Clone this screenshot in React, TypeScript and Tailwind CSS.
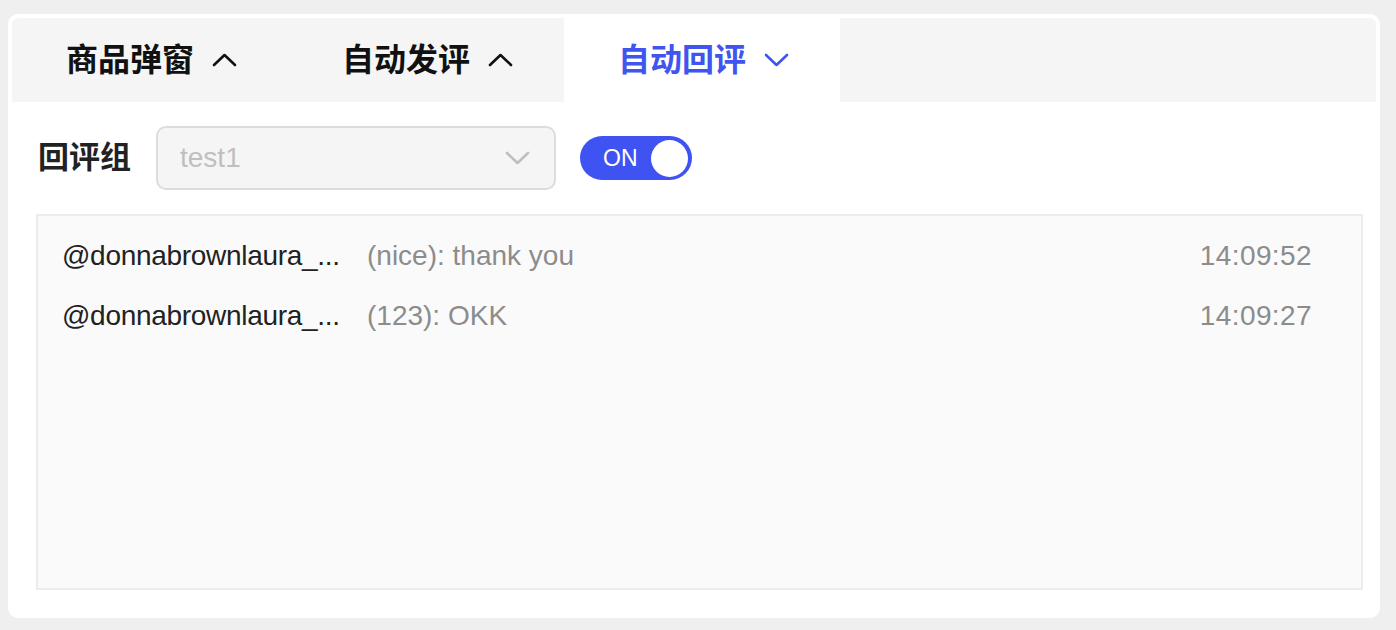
import React, { useState } from 'react';

const tabs = ['商品弹窗', '自动发评', '自动回评'];

const logs = [
    { user: '@donnabrownlaura_...', msg: '(nice): thank you', time: '14:09:52' },
    { user: '@donnabrownlaura_...', msg: '(123): OKK', time: '14:09:27' },
];

function Chevron({ up, className }: { up?: boolean; className?: string }) {
    return (
        <svg width="25" height="14" viewBox="0 0 25 14" fill="none" className={className}>
            <polyline
                points={up ? '2,12 12.5,2 23,12' : '2,2 12.5,12 23,2'}
                stroke="currentColor"
                strokeWidth="2.6"
                strokeLinecap="round"
                strokeLinejoin="round"
            />
        </svg>
    );
}

export default function App() {
    const [active, setActive] = useState(2);
    const [on, setOn] = useState(true);

    return (
        <div
            className="h-[630px] bg-[#efefef] pt-[14px] pl-[8px] pr-[16px]"
            style={{ fontFamily: '"Liberation Sans", "Noto Sans CJK SC", sans-serif' }}
        >
            <div className="h-[604px] bg-white rounded-[10px] p-[4px] flex flex-col">
                {/* Tabs */}
                <div className="flex h-[84px] bg-[#f5f5f5] rounded-t-[6px] overflow-hidden">
                    {tabs.map((t, i) => (
                        <button
                            key={t}
                            onClick={() => setActive(i)}
                            className={`w-[276px] h-full flex items-center pl-[54px] gap-[18px] text-[32px] font-bold ${
                                i === active ? 'bg-white text-[#4054f0]' : 'text-[#111]'
                            }`}
                        >
                            <span>{t}</span>
                            <Chevron up={i !== active} />
                        </button>
                    ))}
                </div>

                {/* Controls */}
                <div className="flex items-center mt-[24px] pl-[26px] h-[64px]">
                    <span className="text-[31px] font-bold text-[#222] w-[118px]">回评组</span>
                    <div className="w-[400px] h-[64px] rounded-[10px] border-2 border-[#dcdcdc] bg-[#f5f5f5] flex items-center justify-between pl-[22px] pr-[24px]">
                        <span className="text-[28px] text-[#bfbfbf]">test1</span>
                        <Chevron className="text-[#bfbfbf]" />
                    </div>
                    <button
                        onClick={() => setOn(!on)}
                        className={`ml-[24px] w-[112px] h-[44px] rounded-full flex items-center pl-[23px] pr-[4px] justify-between ${
                            on ? 'bg-[#3f52f2]' : 'bg-[#bfbfbf]'
                        }`}
                    >
                        <span className="text-white text-[23px] font-medium">ON</span>
                        <span className="w-[37px] h-[37px] rounded-full bg-white" />
                    </button>
                </div>

                {/* Log */}
                <div className="mt-[24px] ml-[24px] mr-[13px] h-[376px] bg-[#fafafa] border-2 border-[#ececec] pt-[10px] pl-[24px] pr-[49px]">
                    {logs.map((l, i) => (
                        <div key={i} className="flex items-center h-[60px] text-[28px]">
                            <span className="w-[305px] whitespace-nowrap text-[#222] tracking-[-0.3px]">{l.user}</span>
                            <span className="text-[#8c8c8c]">{l.msg}</span>
                            <span className="ml-auto text-[#8c8c8c] tracking-[0.4px]">{l.time}</span>
                        </div>
                    ))}
                </div>
            </div>
        </div>
    );
}
